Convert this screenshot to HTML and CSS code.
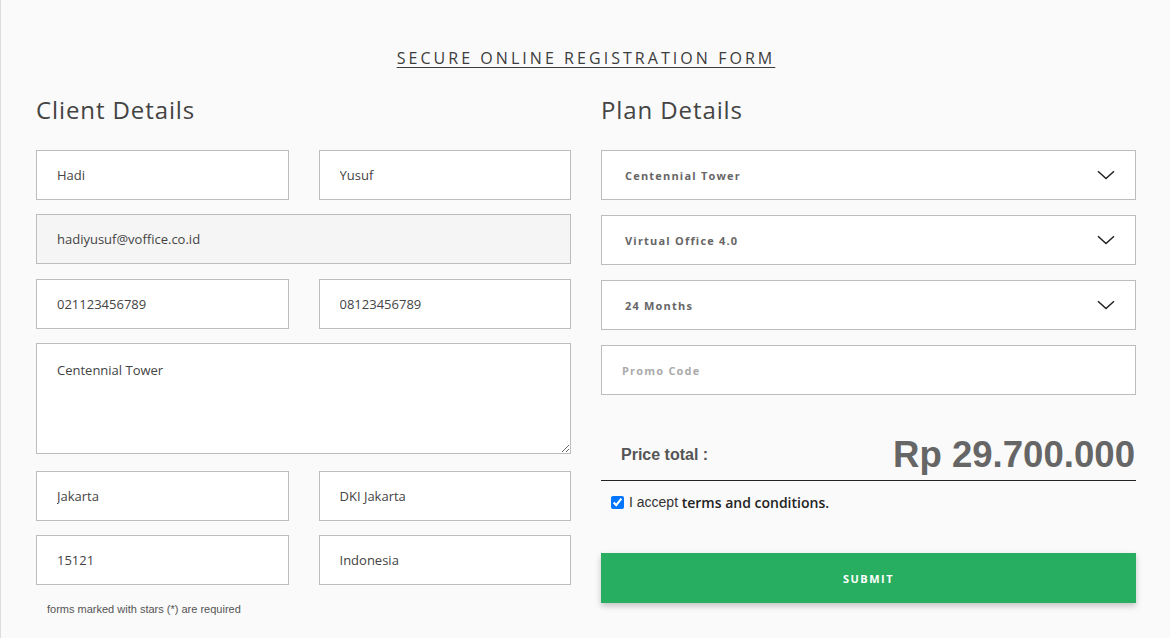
FILE: index.html
```html
<!DOCTYPE html>
<html lang="en">
<head>
<meta charset="utf-8">
<title>Secure Online Registration Form</title>
<link rel="stylesheet" href="styles.css">
</head>
<body>
<div class="page">
  <h1 class="title">SECURE ONLINE REGISTRATION FORM</h1>
  <form class="columns">
    <section class="col">
      <h2 class="col-head">Client Details</h2>
      <div class="fields">
        <input class="field" type="text" value="Hadi">
        <input class="field" type="text" value="Yusuf">
        <input class="field field-wide field-readonly" type="text" value="hadiyusuf@voffice.co.id" readonly>
        <input class="field" type="text" value="021123456789">
        <input class="field" type="text" value="08123456789">
        <textarea class="field field-wide field-area">Centennial Tower</textarea>
        <input class="field" type="text" value="Jakarta">
        <input class="field" type="text" value="DKI Jakarta">
        <input class="field" type="text" value="15121">
        <input class="field" type="text" value="Indonesia">
      </div>
      <p class="note">forms marked with stars (*) are required</p>
    </section>
    <section class="col">
      <h2 class="col-head">Plan Details</h2>
      <div class="plan">
        <div class="select"><span>Centennial Tower</span><svg class="chev" width="18" height="10" viewBox="0 0 18 10"><path d="M1 1.2 L9 8.6 L17 1.2" fill="none" stroke="#222" stroke-width="1.5"/></svg></div>
        <div class="select"><span>Virtual Office 4.0</span><svg class="chev" width="18" height="10" viewBox="0 0 18 10"><path d="M1 1.2 L9 8.6 L17 1.2" fill="none" stroke="#222" stroke-width="1.5"/></svg></div>
        <div class="select"><span>24 Months</span><svg class="chev" width="18" height="10" viewBox="0 0 18 10"><path d="M1 1.2 L9 8.6 L17 1.2" fill="none" stroke="#222" stroke-width="1.5"/></svg></div>
        <div class="select select-promo"><span>Promo Code</span></div>
      </div>
      <div class="price-row">
        <span class="price-label">Price total :</span>
        <span class="price">Rp 29.700.000</span>
      </div>
      <label class="accept"><input type="checkbox" checked class="check"><span class="accept-plain">I accept</span>&nbsp;<b class="accept-bold">terms and conditions.</b></label>
      <button type="button" class="submit">SUBMIT</button>
    </section>
  </form>
</div>
</body>
</html>
```

FILE: styles.css
```css
html, body {
  margin: 0;
  padding: 0;
  background: #fafafa;
}
.page {
  box-sizing: border-box;
  height: 638px;
  border-left: 1px solid #dcdcdc;
  padding: 48px 34px 0 35px;
  font-family: "Open Sans", "DejaVu Sans", sans-serif;
  color: #444;
}
.title {
  margin: 0;
  text-align: center;
  font-size: 16px;
  line-height: 20px;
  font-weight: 400;
  letter-spacing: 3.05px;
  color: #3d3d3d;
  text-decoration: underline;
  text-underline-offset: 3px;
}
.columns {
  display: flex;
  gap: 30px;
  margin-top: 27px;
}
.col {
  flex: 1 1 0;
  min-width: 0;
}
.col-head {
  margin: 0 0 25px;
  font-size: 24px;
  line-height: 30px;
  font-weight: 400;
  letter-spacing: 0.9px;
  color: #444;
}
.fields {
  display: grid;
  grid-template-columns: 1fr 1fr;
  column-gap: 30px;
  row-gap: 14.4px;
}
.field {
  box-sizing: border-box;
  height: 50px;
  width: 100%;
  margin: 0;
  border: 1px solid #bdbdbd;
  background: #fff;
  padding: 0 20px;
  font-family: "Open Sans", "DejaVu Sans", sans-serif;
  font-size: 13px;
  color: #444;
  outline: none;
}
.field-wide {
  grid-column: 1 / 3;
}
.field-readonly {
  background: #f5f5f5;
}
.field-area {
  height: 111px;
  padding: 16px 20px;
  margin-bottom: 2.4px;
  resize: vertical;
  line-height: 20px;
}
.note {
  margin: 18px 0 0 11px;
  font-family: "Liberation Sans", Arial, sans-serif;
  font-size: 11px;
  color: #555;
}
.plan {
  display: flex;
  flex-direction: column;
  gap: 15px;
}
.select {
  box-sizing: border-box;
  height: 50px;
  border: 1px solid #bdbdbd;
  background: #fff;
  display: flex;
  align-items: center;
  justify-content: space-between;
  padding: 0 20px 0 23px;
  font-size: 11px;
  font-weight: 700;
  letter-spacing: 1.2px;
  color: #666;
}
.select-promo {
  color: #aaa;
  padding-left: 20px;
}
.chev {
  display: block;
}
.price-row {
  box-sizing: border-box;
  height: 53px;
  margin-top: 33px;
  border-bottom: 1px solid #222;
  display: flex;
  align-items: center;
  justify-content: space-between;
  padding: 2px 1px 0 20px;
  font-family: "Liberation Sans", Arial, sans-serif;
  font-weight: 700;
}
.price-label {
  font-size: 16px;
  color: #555;
}
.price {
  font-size: 36.6px;
  color: #666;
}
.accept {
  display: flex;
  align-items: center;
  height: 16px;
  margin-top: 13px;
  padding-left: 10px;
  font-size: 14px;
}
.check {
  margin: 0 5px 0 0;
  width: 13px;
  height: 13px;
}
.accept-plain {
  font-family: "Liberation Sans", Arial, sans-serif;
  color: #333;
}
.accept-bold {
  font-weight: 600;
  color: #222;
}
.submit {
  display: block;
  width: 100%;
  height: 50px;
  margin-top: 43px;
  border: 0;
  background: #27ae60;
  color: #fff;
  font-family: "Open Sans", "DejaVu Sans", sans-serif;
  font-size: 11px;
  font-weight: 700;
  letter-spacing: 1.5px;
  box-shadow: 0 3px 6px rgba(0, 0, 0, 0.22);
}
```
